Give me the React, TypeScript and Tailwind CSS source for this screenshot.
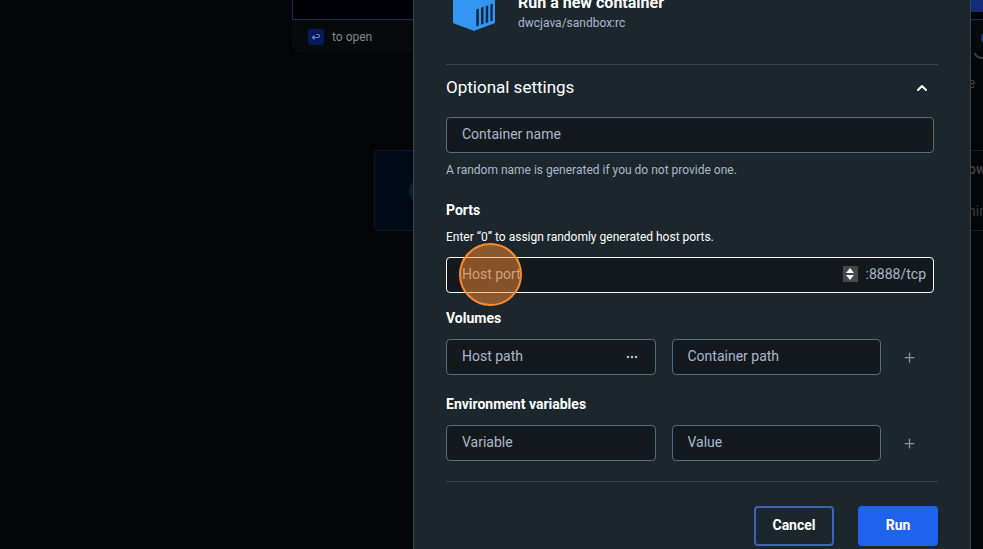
import React from "react";
import { ChevronUp, Plus } from "lucide-react";

function ContainerLogo() {
  return (
    <svg width="44" height="46" viewBox="0 0 44 46" aria-hidden="true">
      <path d="M22 1 L42 8 Q43 8.500 43 9.500 V37 Q43 38 42 38.500 L23 45.500 Q22 46 21 45.500 L2 38.500 Q1 38 1 37 V9.500 Q1 8.500 2 8 Z" fill="#3396f3" />
      <g fill="#10273f">
        <path d="M24.300 24.500 l2.500 -1 v17 l-2.500 1z" />
        <path d="M29 22.800 l2.500 -1 v17 l-2.500 1z" />
        <path d="M33.700 21.200 l2.500 -1 v17 l-2.500 1z" />
        <path d="M38.400 19.600 l2.300 -1 v17 l-2.300 1z" />
      </g>
    </svg>
  );
}

const field =
  "h-9 w-full min-w-0 rounded-[4px] border border-[#576c7c] bg-[#14191d] px-[15px] pb-[3px] text-[14px] text-[#b1bfd0] outline-none placeholder:text-[#a9b8cc]";

function Backdrop() {
  return (
    <div className="min-h-screen overflow-hidden bg-[#040507] pl-[292px]">
      <div className="flex h-5 justify-end border-b border-l border-[#1c2f5b] bg-[#010207]">
        <div className="h-3 w-3 bg-[#122c7a]" />
      </div>
      <div className="flex h-[33px] items-center gap-2 rounded-b-lg bg-[#07090b] pl-4 text-[12px] text-[#878787]">
        <span className="flex h-4 w-4 items-center justify-center rounded-[3px] bg-[#041a5c] text-[#7088b8]">
          <svg width="10" height="10" viewBox="0 0 10 10" fill="none" stroke="currentColor" strokeWidth="1.200">
            <path d="M3.500 3.500 L1.500 5.500 L3.500 7.500 M1.500 5.500 H7 Q8.500 5.500 8.500 4 Q8.500 2.500 7 2.500 H5.500" />
          </svg>
        </span>
        <span>to open</span>
        <svg className="ml-auto self-end" width="10" height="24" viewBox="0 0 10 24" aria-hidden="true">
          <path d="M10 5 Q8 9 10 13" stroke="#0d3a7a" strokeWidth="2" fill="none" />
        </svg>
      </div>
      <div className="flex h-5 justify-end">
        <svg width="10" height="8" viewBox="0 0 10 8" aria-hidden="true">
          <path d="M2 0 Q3 5 10 5" stroke="#3c3e40" strokeWidth="2" fill="none" />
        </svg>
      </div>
      <div className="flex h-5 justify-end text-[14px] leading-5 text-[#3c3e40]">
        <span className="w-[15px]">e</span>
      </div>
      <div className="mt-[57px] flex justify-between pl-[82px]">
        <div className="flex h-[81px] w-[280px] items-center rounded-[4px] border border-[#0a1a2b] bg-[#010a17] pl-[34px]">
          <div className="h-5 w-5 rounded-lg bg-[#082026]" />
        </div>
        <div className="flex h-[81px] w-[15px] flex-col justify-between overflow-hidden border-y border-[#1a1c1e] py-2 text-[14px] text-[#3c3e40]">
          <span className="font-bold">ow</span>
          <span>nin</span>
        </div>
      </div>
    </div>
  );
}

function PathRow({ first, second, browse }: { first: string; second: string; browse?: boolean }) {
  return (
    <div className="mt-[11px] flex">
      <div className="flex flex-1 gap-4">
        <div className="relative flex-1">
          <input className={field} placeholder={first} aria-label={first} />
          {browse && (
            <button aria-label="Browse" className="absolute right-[18px] top-3 text-[#a9b8cc]">
              <svg width="12" height="12" viewBox="0 0 12 12" fill="currentColor">
                <circle cx="2" cy="6" r="1.300" />
                <circle cx="6" cy="6" r="1.300" />
                <circle cx="10" cy="6" r="1.300" />
              </svg>
            </button>
          )}
        </div>
        <div className="flex-1">
          <input className={field} placeholder={second} aria-label={second} />
        </div>
      </div>
      <button aria-label="Add row" className="flex w-[57px] items-center justify-center text-[#7f93ad]">
        <Plus size={15} strokeWidth={2} />
      </button>
    </div>
  );
}

function RunDialog() {
  return (
    <section
      role="dialog"
      aria-label="Run a new container"
      className="-mt-10 w-[558px] border-x border-[#33434d] bg-[#1c262d] px-8 pb-8 pt-6"
    >
      <header className="flex h-[81px] gap-5 border-b border-[#3a454c] pl-[6px]">
        <div className="pt-[1px]">
          <ContainerLogo />
        </div>
        <div className="pl-[2px] pt-[7px]">
          <h2 className="text-[16px] font-bold leading-6 text-white">Run a new container</h2>
          <p className="text-[12px] leading-4 text-[#a9b8cc]">dwcjava/sandbox:rc</p>
        </div>
      </header>
      <button aria-expanded="true" className="flex h-[46px] w-full items-center justify-between pr-2 text-[17px] text-white">
        <span>Optional settings</span>
        <ChevronUp size={16} strokeWidth={3} />
      </button>
      <div className="mt-[6px] pr-1">
        <input className={field} placeholder="Container name" aria-label="Container name" />
        <p className="mt-2 text-[12px] leading-[18px] text-[#a9b8cc]">A random name is generated if you do not provide one.</p>
      </div>
      <h3 className="mt-[21px] text-[14px] font-bold leading-5 text-white">Ports</h3>
      <p className="mt-2 text-[12px] leading-[18px] text-white">Enter “0” to assign randomly generated host ports.</p>
      <div className="mt-[11px] pr-1">
        <div className="relative flex h-9 items-center rounded-[4px] border border-white bg-[#14191d] pb-[2px] pl-[15px] pr-[7px] text-[14px] text-[#a9b8cc]">
          <input
            inputMode="numeric"
            className="min-w-0 flex-1 bg-transparent outline-none placeholder:text-[#a9b8cc]"
            placeholder="Host port"
            aria-label="Host port"
          />
          <div className="mr-2 flex h-4 w-[15px] flex-col items-center justify-center gap-[2px] bg-[#484848]">
            <button aria-label="Increase">
              <svg className="block" width="8" height="5" viewBox="0 0 8 5"><path d="M4 0 8 5H0z" fill="#fff" /></svg>
            </button>
            <button aria-label="Decrease">
              <svg className="block" width="8" height="5" viewBox="0 0 8 5"><path d="M4 5 8 0H0z" fill="#fff" /></svg>
            </button>
          </div>
          <span>:8888/tcp</span>
          <div className="pointer-events-none absolute left-3 top-[-15px] h-[63px] w-[63px] rounded-full border-2 border-[#f78b32] bg-[#f78b32]/50" />
        </div>
      </div>
      <h3 className="mt-[15px] text-[14px] font-bold leading-5 text-white">Volumes</h3>
      <PathRow first="Host path" second="Container path" browse />
      <h3 className="mt-[19px] text-[14px] font-bold leading-5 text-white">Environment variables</h3>
      <PathRow first="Variable" second="Value" />
      <footer className="mt-5 flex justify-end gap-6 border-t border-[#3a454c] pt-6">
        <button className="h-10 w-20 rounded-[4px] border-2 border-[#3a66b4] pb-[2px] text-[14px] font-bold text-white">Cancel</button>
        <button className="h-10 w-20 rounded-[4px] bg-[#1d63ed] pb-[2px] text-[14px] font-bold text-white">Run</button>
      </footer>
    </section>
  );
}

export default function App() {
  return (
    <main className="relative h-screen overflow-hidden font-['Roboto',sans-serif]">
      <Backdrop />
      <div className="absolute inset-0 flex items-start justify-end overflow-hidden pr-3">
        <RunDialog />
      </div>
    </main>
  );
}
